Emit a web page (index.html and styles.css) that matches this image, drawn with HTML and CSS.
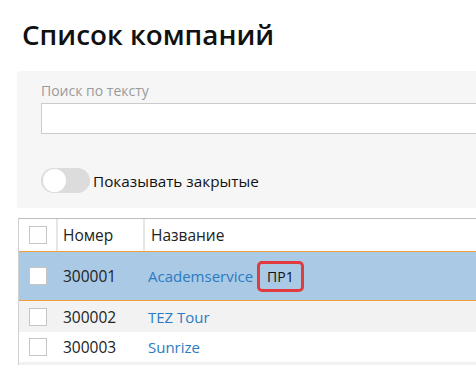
FILE: index.html
```html
<!DOCTYPE html>
<html lang="ru">
<head>
    <meta charset="UTF-8">
    <meta name="viewport" content="width=device-width, initial-scale=1.0">
    <title>Список компаний</title>
    <link rel="stylesheet" href="styles.css">
</head>
<body>

<div class="page">
    <h1 class="page-title">Список компаний</h1>

    <div class="filter-panel">
        <label class="filter-label" for="search">Поиск по тексту</label>
        <input class="filter-input" id="search" type="text" />
        <div class="toggle-row">
            <span class="toggle"></span>
            <span class="toggle-label">Показывать закрытые</span>
        </div>
    </div>

    <div class="company-table">
        <div class="table-row table-head">
            <div class="cell cell-check"><span class="checkbox"></span></div>
            <div class="cell cell-number">Номер</div>
            <div class="cell cell-name">Название</div>
        </div>
        <div class="table-row row-selected">
            <div class="cell cell-check"><span class="checkbox"></span></div>
            <div class="cell cell-number">300001</div>
            <div class="cell cell-name"><a href="#">Academservice</a><span class="badge">ПР1</span></div>
        </div>
        <div class="table-row row-odd">
            <div class="cell cell-check"><span class="checkbox"></span></div>
            <div class="cell cell-number">300002</div>
            <div class="cell cell-name"><a href="#">TEZ Tour</a></div>
        </div>
        <div class="table-row">
            <div class="cell cell-check"><span class="checkbox"></span></div>
            <div class="cell cell-number">300003</div>
            <div class="cell cell-name"><a href="#">Sunrize</a></div>
        </div>
        <div class="table-row row-odd"></div>
    </div>
</div>

</body>
</html>
```

FILE: styles.css
```css
body {
    margin: 0;
    font-family: "Open Sans", "Liberation Sans", sans-serif;
    color: #222;
    background: #fff;
    overflow: hidden;
}
.page {
    width: 640px;
    padding-left: 17px;
}
.page-title {
    margin: 16px 0 19px 5px;
    font-size: 27.8px;
    font-weight: 600;
    line-height: 36px;
    color: #111;
}
.filter-panel {
    background: #f6f6f6;
    padding: 10px 24px 15px;
    border-radius: 3px 0 0 3px;
}
.filter-label {
    display: block;
    font-size: 14px;
    line-height: 20px;
    color: #9a9a9a;
    margin-bottom: 2px;
}
.filter-input {
    display: block;
    width: 100%;
    height: 31px;
    box-sizing: border-box;
    border: 1px solid #ccc;
    background: #fff;
    margin: 0;
}
.toggle-row {
    display: flex;
    align-items: center;
    gap: 3px;
    margin-top: 34px;
}
.toggle {
    position: relative;
    width: 49px;
    height: 25px;
    border-radius: 13px;
    background: #dcdcdc;
}
.toggle::after {
    content: "";
    position: absolute;
    left: 2px;
    top: 1px;
    width: 23px;
    height: 23px;
    border-radius: 50%;
    background: #fff;
}
.toggle-label {
    font-size: 15.3px;
    color: #111;
}
.company-table {
    margin: 10px 0 0 1px;
    border-top: 1px solid #bdbdbd;
    border-left: 1px solid #d0d0d0;
    font-size: 15.5px;
}
.table-row {
    display: grid;
    grid-template-columns: 37px 87px 1fr;
    height: 30px;
}
.table-head {
    height: 32px;
}
.row-selected {
    height: 48px;
    background: #aac9e5;
    border-top: 1px solid #f0a03a;
    border-bottom: 1px solid #f0a03a;
}
.row-odd {
    background: #f2f2f2;
}
.table-row + .row-odd {
    height: 31px;
}
.cell {
    display: flex;
    align-items: center;
}
.cell-check {
    padding-left: 10px;
}
.cell-number {
    padding-left: 7px;
}
.cell-name {
    padding-left: 5px;
}
.table-head .cell + .cell {
    border-left: 2px solid #e6e6e6;
}
.table-head .cell-number {
    padding-left: 5px;
}
.table-head .cell-name {
    padding-left: 6px;
}
.checkbox {
    width: 16px;
    height: 16px;
    border: 1px solid #c6c6c6;
    background: #fff;
}
.cell-name a {
    font-size: 15px;
    color: #2b7bc2;
    text-decoration: none;
}
.badge {
    margin-left: 4px;
    padding: 0 7px;
    height: 25px;
    line-height: 25px;
    border: 3px solid #e23b3f;
    border-radius: 5px;
    font-size: 14px;
    color: #111;
}
```
